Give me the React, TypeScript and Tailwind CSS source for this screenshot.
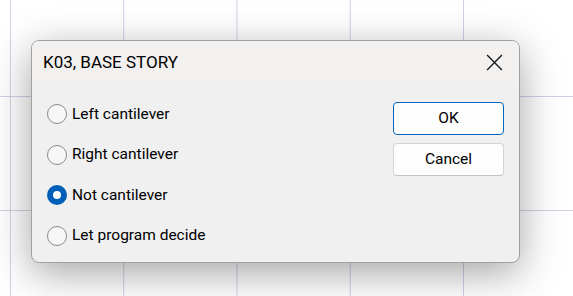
import { useState } from 'react';

const options = ['Left cantilever', 'Right cantilever', 'Not cantilever', 'Let program decide'];

function Radio({ checked }: { checked: boolean }) {
  if (checked) {
    return (
      <span className="flex h-5 w-5 shrink-0 items-center justify-center rounded-full bg-[#005fb8]">
        <span className="h-2 w-2 rounded-full bg-white" />
      </span>
    );
  }
  return <span className="h-5 w-5 shrink-0 rounded-full border border-[#8a8a8a] bg-[#f7f7f7]" />;
}

export default function App() {
  const [selected, setSelected] = useState(2);

  return (
    <div
      className="h-[296px] w-[573px] overflow-hidden bg-white pl-[31px] pt-[40px] font-['Roboto','Liberation_Sans',sans-serif] text-black bg-[linear-gradient(to_right,#d3d0e4_1px,transparent_1px),linear-gradient(to_bottom,#d3d0e4_1px,transparent_1px)] bg-[size:113.25px_114px] bg-[position:10px_96px]"
    >
      {/* Dialog */}
      <div className="flex h-[223px] w-[489px] flex-col overflow-hidden rounded-lg border border-[#a0a0a0] bg-[#f0f0f0] shadow-[0_10px_40px_rgba(0,0,0,0.36)]">
        {/* Title bar */}
        <div className="flex h-[42px] shrink-0 items-center justify-between bg-[#f3f1ef] pl-[11px] pr-[15px]">
          <span className="pt-[1px] text-[17px] leading-none">K03, BASE STORY</span>
          <button className="flex h-5 w-5 items-center justify-center">
            <svg width="17" height="17" viewBox="0 0 16 16" fill="none" stroke="#1b1b1b" strokeWidth="1.3">
              <path d="M1 1 L15 15 M15 1 L1 15" />
            </svg>
          </button>
        </div>

        {/* Body */}
        <div className="flex flex-1 justify-between pl-[15px] pr-[15px]">
          <div className="flex flex-col pt-[11px]">
            {options.map((label, i) => (
              <label
                key={label}
                onClick={() => setSelected(i)}
                className="flex h-[40.5px] cursor-default items-center gap-[5px] text-[15.5px]"
              >
                <Radio checked={selected === i} />
                <span>{label}</span>
              </label>
            ))}
          </div>

          <div className="flex flex-col gap-2 pt-[19px]">
            <button className="h-[33px] w-[111px] rounded border border-[#0067c0] bg-[#fdfdfd] text-[15.5px]">
              OK
            </button>
            <button className="h-[33px] w-[111px] rounded border border-[#d3d3d3] border-b-[#c2c2c2] bg-[#fdfdfd] text-[15.5px]">
              Cancel
            </button>
          </div>
        </div>
      </div>
    </div>
  );
}
